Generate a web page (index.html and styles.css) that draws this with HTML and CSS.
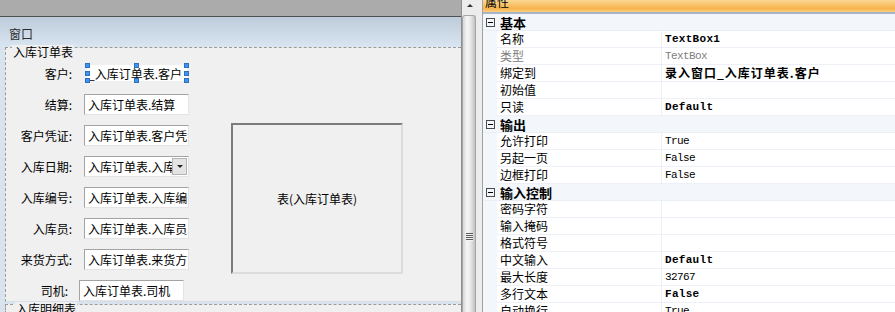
FILE: index.html
```html
<!DOCTYPE html>
<html lang="zh-CN">
<head>
    <meta charset="UTF-8">
    <meta name="viewport" content="width=device-width, initial-scale=1.0">
    <title>录入窗口</title>
    <link rel="stylesheet" href="styles.css">
</head>
<body>
    <div class="designer">
        <div class="top-band"></div>
        <div class="window-title">窗口</div>
        <div class="canvas">
            <div class="group">
                <div class="group-title">入库订单表</div>
                <div class="form">
                    <div class="field-label">客户:</div>
                    <div class="field selected">
                        _入库订单表.客户
                        <span class="handle h-tl"></span>
                        <span class="handle h-tm"></span>
                        <span class="handle h-tr"></span>
                        <span class="handle h-ml"></span>
                        <span class="handle h-mr"></span>
                        <span class="handle h-bl"></span>
                        <span class="handle h-bm"></span>
                        <span class="handle h-br"></span>
                    </div>

                    <div class="field-label">结算:</div>
                    <div class="field">入库订单表.结算</div>

                    <div class="field-label">客户凭证:</div>
                    <div class="field">入库订单表.客户凭证</div>

                    <div class="table-box">表(入库订单表)</div>

                    <div class="field-label">入库日期:</div>
                    <div class="field combo">
                        <span class="combo-text">入库订单表.入库日期</span>
                        <span class="combo-btn"><span class="arrow"></span></span>
                    </div>

                    <div class="field-label">入库编号:</div>
                    <div class="field">入库订单表.入库编号</div>

                    <div class="field-label">入库员:</div>
                    <div class="field">入库订单表.入库员</div>

                    <div class="field-label">来货方式:</div>
                    <div class="field">入库订单表.来货方式</div>

                    <div class="field-label shift">司机:</div>
                    <div class="field shift">入库订单表.司机</div>
                </div>
            </div>
            <div class="group next">
                <div class="group-title">入库明细表</div>
            </div>
        </div>
    </div>

    <div class="vscroll">
        <div class="scroll-up"><span class="arrow-up"></span></div>
        <div class="thumb"><span class="grip"></span></div>
    </div>
    <div class="splitter"></div>

    <div class="props">
        <div class="props-title"><span>属性</span></div>

        <div class="prop-cat"><span class="toggle"></span>基本</div>
        <div class="prop-row"><span class="prop-name">名称</span><span class="prop-value mono bold">TextBox1</span></div>
        <div class="prop-row muted"><span class="prop-name">类型</span><span class="prop-value mono">TextBox</span></div>
        <div class="prop-row"><span class="prop-name">绑定到</span><span class="prop-value bold wide">录入窗口_入库订单表.客户</span></div>
        <div class="prop-row"><span class="prop-name">初始值</span><span class="prop-value"></span></div>
        <div class="prop-row"><span class="prop-name">只读</span><span class="prop-value mono bold">Default</span></div>

        <div class="prop-cat"><span class="toggle"></span>输出</div>
        <div class="prop-row"><span class="prop-name">允许打印</span><span class="prop-value mono">True</span></div>
        <div class="prop-row"><span class="prop-name">另起一页</span><span class="prop-value mono">False</span></div>
        <div class="prop-row"><span class="prop-name">边框打印</span><span class="prop-value mono">False</span></div>

        <div class="prop-cat"><span class="toggle"></span>输入控制</div>
        <div class="prop-row"><span class="prop-name">密码字符</span><span class="prop-value"></span></div>
        <div class="prop-row"><span class="prop-name">输入掩码</span><span class="prop-value"></span></div>
        <div class="prop-row"><span class="prop-name">格式符号</span><span class="prop-value"></span></div>
        <div class="prop-row"><span class="prop-name">中文输入</span><span class="prop-value mono bold">Default</span></div>
        <div class="prop-row"><span class="prop-name">最大长度</span><span class="prop-value mono">32767</span></div>
        <div class="prop-row"><span class="prop-name">多行文本</span><span class="prop-value mono bold">False</span></div>
        <div class="prop-row"><span class="prop-name">自动换行</span><span class="prop-value mono">True</span></div>
    </div>
</body>
</html>
```

FILE: styles.css
```css
* {
    box-sizing: border-box;
}
body {
    margin: 0;
    width: 895px;
    height: 312px;
    overflow: hidden;
    display: flex;
    font-family: "Noto Sans CJK SC", sans-serif;
    font-size: 12px;
    color: #000;
    background: #f0f0f0;
}

/* left: form designer */
.designer {
    width: 461px;
    flex: none;
    display: flex;
    flex-direction: column;
    overflow: hidden;
}
.top-band {
    height: 17px;
    flex: none;
    background: #ababab;
    border-bottom: 1px solid #4f4f4f;
}
.window-title {
    height: 30px;
    flex: none;
    padding: 10px 0 0 9px;
    line-height: 14px;
    color: #2e2e2e;
    background: linear-gradient(#bdcbda, #d9e5f1);
}
.canvas {
    flex: 1;
    padding-left: 5px;
    background: #d8e3ee;
}
.group {
    background: #f0f0f0;
    border-top: 1px dashed #9a9a9a;
    border-left: 1px dashed #9a9a9a;
    border-bottom: 1px solid #d6dfe9;
}
.group.next {
    margin-top: 2px;
    height: 10px;
    border-bottom: none;
}
.group-title {
    width: fit-content;
    margin: -3px 0 0 6px;
    padding: 0 1px;
    line-height: 14px;
    background: #f0f0f0;
}
.group.next .group-title {
    margin-left: 9px;
}
.form {
    display: grid;
    grid-template-columns: 66px 105px 202px;
    grid-auto-rows: 21px;
    column-gap: 12px;
    row-gap: 10px;
    margin-top: 4px;
}
.field-label {
    grid-column: 1;
    text-align: right;
    line-height: 21px;
}
.field {
    grid-column: 2;
    background: #fff;
    border: 1px solid;
    border-color: #a3a3a3 #e4e4e4 #e4e4e4 #a3a3a3;
    padding-left: 3px;
    line-height: 19px;
    white-space: nowrap;
    overflow: hidden;
}
.field-label.shift {
    margin-right: 4px;
}
.field.shift {
    margin-left: -5px;
    margin-right: 5px;
}
.field.selected {
    position: relative;
    overflow: visible;
    margin: 2px 2px 3px 3px;
    padding-left: 0;
    border-color: transparent;
    line-height: 16px;
}
.handle {
    position: absolute;
    width: 5px;
    height: 5px;
    background: #3d94f6;
    border: 1px solid #3070b8;
}
.h-tl { left: -3px; top: -3px; }
.h-tm { left: 46px; top: -3px; }
.h-tr { right: -3px; top: -3px; }
.h-ml { left: -3px; top: 5px; }
.h-mr { right: -3px; top: 5px; }
.h-bl { left: -3px; bottom: -3px; }
.h-bm { left: 46px; bottom: -3px; }
.h-br { right: -3px; bottom: -3px; }

.field.combo {
    display: flex;
    padding-right: 1px;
}
.combo-text {
    flex: 1;
    overflow: hidden;
}
.combo-btn {
    width: 15px;
    height: 17px;
    margin-top: 1px;
    display: flex;
    align-items: center;
    justify-content: center;
    background: #e4e4e4;
    border: 1px solid #b4b4b4;
}
.arrow {
    border-top: 3px solid #222;
    border-left: 3px solid transparent;
    border-right: 3px solid transparent;
}
.table-box {
    grid-column: 3;
    grid-row: 3 / span 5;
    align-self: start;
    height: 151px;
    margin: -2px 0 0 30px;
    display: flex;
    align-items: center;
    justify-content: center;
    border: 2px solid;
    border-color: #7c7c7c #dcdcdc #dcdcdc #7c7c7c;
}

/* scrollbar + splitter */
.vscroll {
    width: 16px;
    flex: none;
    display: flex;
    flex-direction: column;
    background: #ececec;
    border-left: 1px solid #8e8e8e;
}
.scroll-up {
    height: 15px;
    flex: none;
    display: flex;
    justify-content: center;
    padding-top: 4px;
}
.arrow-up {
    width: 0;
    height: 0;
    border-bottom: 3px solid #333;
    border-left: 3px solid transparent;
    border-right: 3px solid transparent;
}
.thumb {
    flex: 1;
    margin-right: 1px;
    padding-top: 217px;
    border: 1px solid #a6a6a6;
    border-bottom: none;
    border-radius: 3px 3px 0 0;
    background: linear-gradient(90deg, #d6d6d6, #f7f7f7 35%, #e6e6e6 65%, #c2c2c2);
    display: flex;
    align-items: flex-start;
    justify-content: center;
}
.grip {
    width: 7px;
    height: 8px;
    background: repeating-linear-gradient(#5a5a5a 0 1px, #f4f4f4 1px 2px);
}
.splitter {
    width: 6px;
    flex: none;
    background: #ededed;
    border-right: 1px solid #a2a2a2;
}

/* right: property grid */
.props {
    flex: 1;
    height: 312px;
    overflow: hidden;
    background: #fff;
}
.props-title {
    height: 14px;
    padding-left: 2px;
    overflow: hidden;
    line-height: 12px;
    background: linear-gradient(#fbd895, #f8b44c 70%, #fbcd82);
    border-bottom: 2px solid #a6b6c7;
}
.props-title span {
    display: block;
    margin-top: -4px;
}
.prop-cat {
    height: 17px;
    display: flex;
    align-items: center;
    padding-left: 3px;
    font-size: 13px;
    font-weight: bold;
    background: #f3f6fb;
    border-bottom: 1px solid #eaeff6;
}
.toggle {
    position: relative;
    width: 9px;
    height: 9px;
    margin-right: 5px;
    border: 1px solid #4a4a4a;
}
.toggle::after {
    content: "";
    position: absolute;
    left: 1px;
    top: 3px;
    width: 5px;
    height: 1px;
    background: #000;
}
.prop-row {
    height: 17px;
    display: flex;
    padding-left: 14px;
    background: #f3f6fb;
}
.prop-name {
    width: 165px;
    flex: none;
    padding-left: 3px;
    line-height: 16px;
    background: #fff;
    border-right: 1px solid #edf1f7;
    border-bottom: 1px solid #edf1f7;
}
.prop-value {
    flex: 1;
    padding-left: 3px;
    line-height: 16px;
    white-space: nowrap;
    background: #fff;
    border-bottom: 1px solid #edf1f7;
}
.prop-value.wide {
    letter-spacing: 1px;
}
.mono {
    font-family: "Liberation Mono", monospace;
    font-size: 11px;
    letter-spacing: -0.6px;
}
.mono.bold {
    letter-spacing: 0.3px;
}
.bold {
    font-weight: bold;
}
.muted {
    color: #808080;
}
```
